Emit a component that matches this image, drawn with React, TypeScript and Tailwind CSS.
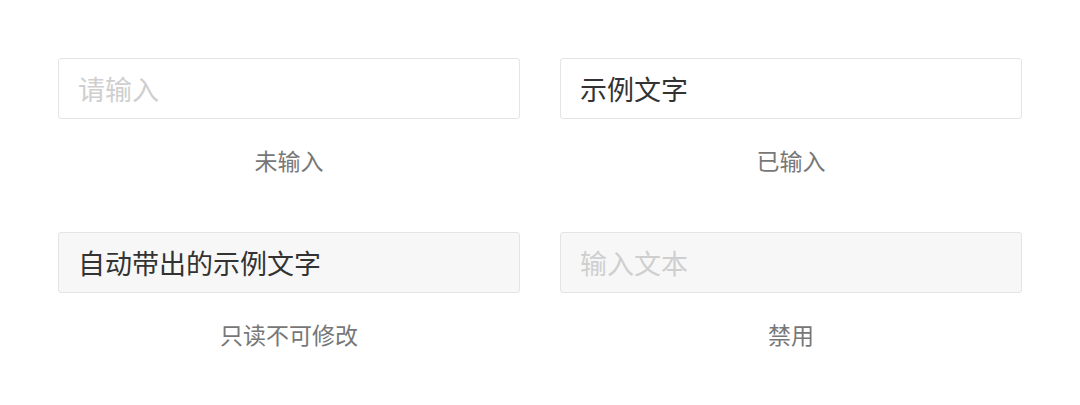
import React from 'react';

const fields = [
  { label: '未输入', placeholder: '请输入', value: '', readOnly: false, disabled: false },
  { label: '已输入', placeholder: '', value: '示例文字', readOnly: false, disabled: false },
  { label: '只读不可修改', placeholder: '', value: '自动带出的示例文字', readOnly: true, disabled: false },
  { label: '禁用', placeholder: '输入文本', value: '', readOnly: false, disabled: true },
];

const App: React.FC = () => {
  return (
    <div
      className="w-[1080px] h-[405px] bg-white pt-[58px] px-[58px]"
      style={{ fontFamily: '"Noto Sans CJK SC", "Noto Sans", sans-serif' }}
    >
      <div className="grid grid-cols-2 gap-x-10 gap-y-[57px]">
        {fields.map((f, i) => (
          <div key={i} className="flex flex-col items-center">
            <input
              className={
                'w-full h-[61px] px-[19px] rounded-[3px] border border-[#e4e4e4] text-[27px] text-[#333] outline-none placeholder:text-[#cfcfcf] ' +
                (f.readOnly || f.disabled ? 'bg-[#f7f7f7]' : 'bg-white')
              }
              placeholder={f.placeholder}
              defaultValue={f.value}
              readOnly={f.readOnly}
              disabled={f.disabled}
            />
            <span className="mt-[26px] text-[23px] leading-[30px] text-[#777]">{f.label}</span>
          </div>
        ))}
      </div>
    </div>
  );
};

export default App;
